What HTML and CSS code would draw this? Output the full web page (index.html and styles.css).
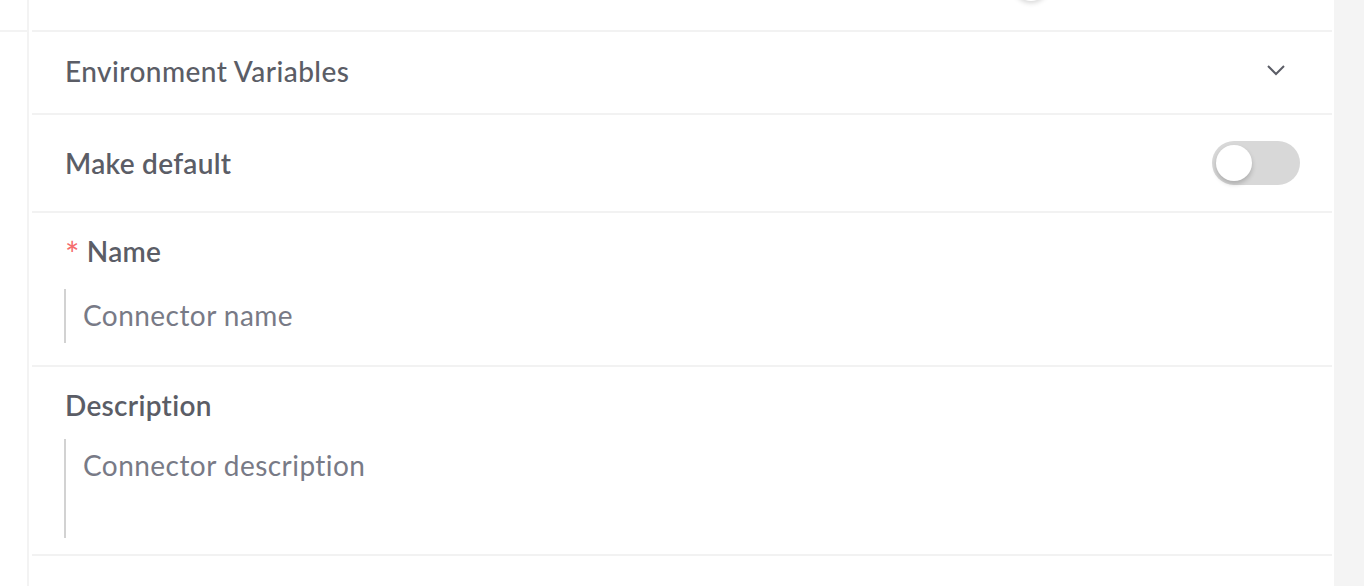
FILE: index.html
```
<!DOCTYPE html>
<html lang="en">
<head>
    <meta charset="UTF-8">
    <meta name="viewport" content="width=device-width, initial-scale=1.0">
    <title>Connector</title>
    <link rel="stylesheet" href="styles.css">
</head>
<body>
    <div class="page">
        <div class="side">
            <div class="side-top"></div>
        </div>
        <div class="panel">
            <div class="row row-top">
                <div class="ghost-knob"></div>
            </div>
            <div class="row row-env">
                <span class="title">Environment Variables</span>
                <svg class="chevron" width="20" height="12" viewBox="0 0 20 12">
                    <path d="M2 2 L10 10 L18 2" fill="none" stroke="#5b5d66" stroke-width="2"/>
                </svg>
            </div>
            <div class="row row-default">
                <span class="label">Make default</span>
                <div class="toggle"><div class="knob"></div></div>
            </div>
            <div class="row field field-name">
                <div class="label"><span class="req">*</span>Name</div>
                <div class="input">Connector name</div>
            </div>
            <div class="row field field-desc">
                <div class="label">Description</div>
                <div class="input textarea">Connector description</div>
            </div>
        </div>
        <div class="gutter"></div>
    </div>
</body>
</html>
```

FILE: styles.css
```
body{
    margin: 0;
    background: #fff;
    font-family: "Lato", "Liberation Sans", sans-serif;
    color: #585a64;
}
.page{display: flex; height: 586px; overflow: hidden;}
.side{width: 27px; border-right: 2px solid #f3f3f3;}
.side-top{height: 30px; border-bottom: 2px solid #f3f3f3;}
.panel{width: 1300px; margin: 0 2px 0 3px;}
.gutter{flex: 1; background: #f4f4f4;}

.row{border-bottom: 2px solid #f2f2f2; padding: 0 33px; box-sizing: border-box;}
.row-top{height: 32px; overflow: hidden;}
.ghost-knob{width: 36px; height: 36px; border-radius: 50%; background: #fff; margin: -35px 0 0 948px;
    box-shadow: 0 2px 5px rgba(0,0,0,0.16);}

.row-env{height: 83px; display: flex; align-items: center; justify-content: space-between; padding-right: 46px;}
.title{font-size: 28px; font-weight: 500; letter-spacing: 0.45px; color: #5b5d66; margin-top: -3px;}
.chevron{margin-top: -6px;}

.row-default{height: 98px; display: flex; align-items: center; justify-content: space-between; padding-right: 32px;}
.label{font-size: 28px; font-weight: 600; letter-spacing: 0.3px; color: #5b5d66;}
.toggle{width: 88px; height: 44px; border-radius: 22px; background: #d8d8d8; padding: 4px; box-sizing: border-box;}
.knob{width: 36px; height: 36px; border-radius: 50%; background: #fff; box-shadow: 0 3px 5px rgba(0,0,0,0.2);}

.field .label{display: flex; align-items: center;}
.req{color: #f56c6c; font-weight: 400; font-size: 34px; line-height: 28px; margin: 6px 7px 0 0;}
.field-name{height: 154px; padding-top: 21px;}
.field-desc{height: 189px; padding-top: 21px;}
.input{border-left: 2px solid #d2d2d2; padding-left: 17px; font-size: 28px; letter-spacing: 0.45px; color: #787a86; margin-left: -1px;}
.field-name .input{height: 54px; line-height: 52px; margin-top: 21px;}
.textarea{height: 99px; margin-top: 17px; line-height: 52px;}
```
